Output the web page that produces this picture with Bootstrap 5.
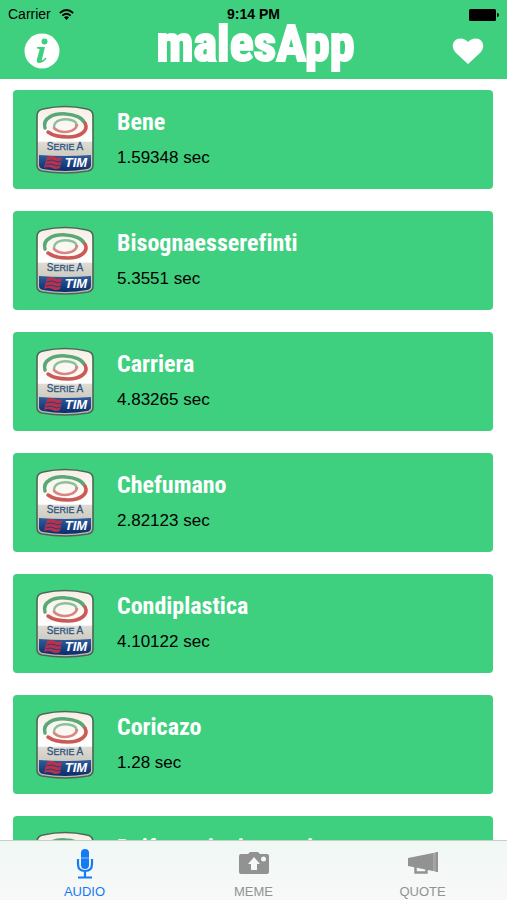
<!DOCTYPE html>
<html lang="it">
<head>
<meta charset="utf-8">
<meta name="viewport" content="width=device-width, initial-scale=1">
<title>malesApp</title>
<link href="https://cdn.jsdelivr.net/npm/bootstrap@5.3.0/dist/css/bootstrap.min.css" rel="stylesheet">
<style>
body { font-family: "Liberation Sans", Arial, sans-serif; color: #000; background: #fff; }
.app-header { background: #3fd07f; }
.status-line { font-size: 14px; line-height: 16px; padding: 6px 8px 0; }
.status-line > * { flex: 1 1 0; }
.title-line { padding: 0 22px 0 24px; height: 57px; }
.app-title, .clip-name { font-family: "Roboto Condensed", Roboto, sans-serif; font-weight: 700; color: #fff; font-variant-ligatures: none; }
.app-title { font-size: 50px; line-height: 44px; padding-bottom: 14px; -webkit-text-stroke: 2px #fff; }
.icon-btn { background: none; border: 0; padding: 0; line-height: 0; }
.clip-list { padding: 11px 14px 0 13px; gap: 22px; min-height: 0; }
.clip { background: #3fd07f; border: 0; border-radius: 4px; height: 99px; padding: 0 22px; gap: 22px; text-align: left; }
.clip-name { font-size: 24px; line-height: 28px; }
.clip-time { font-size: 17px; line-height: 20px; margin: 12px 0 4px; }
.tab-bar { height: 60px; background: linear-gradient(#f0f8f4, #f8f8f8); border-top: 1px solid #c4d0c9; }
.tab-link { color: #929292; font-size: 13px; line-height: 16px; text-decoration: none; padding-top: 7px; }
.tab-link.current { color: #147bf5; }
.tab-link svg { margin-bottom: 4px; }
</style>
<script src="https://cdn.jsdelivr.net/npm/bootstrap@5.3.0/dist/js/bootstrap.bundle.min.js"></script>
</head>
<body class="vh-100 d-flex flex-column overflow-hidden">
<svg width="0" height="0" class="position-absolute" aria-hidden="true">
  <defs>
    <linearGradient id="shade" x1="0" y1="0" x2="0" y2="1"><stop offset="0" stop-color="#f6eee4"/><stop offset=".52" stop-color="#fff"/><stop offset=".54" stop-color="#dedbd3"/><stop offset="1" stop-color="#b9b6ac"/></linearGradient>
    <linearGradient id="blue" x1="0" y1="0" x2="0" y2="1"><stop offset="0" stop-color="#2e5d9c"/><stop offset="1" stop-color="#0b2c6c"/></linearGradient>
    <symbol id="badge-art" viewBox="0 0 60 72">
      <path d="M2 12Q2 6 8 5Q30 0 52 5Q58 6 58 12V61Q58 66 53 67Q30 71 7 67Q2 66 2 61Z" fill="url(#shade)" stroke="#4c6657" stroke-width="1.600"/>
      <g fill="none" stroke-linecap="round">
        <path d="M10 24C7 14 19 9 31 10C40 10.500 47 14 49 18" stroke="#5aa877" stroke-width="3.500"/>
        <path d="M19 23C19 16 29 14 36 16C40 17 42 19 41 21" stroke="#8cc09b" stroke-width="2.500"/>
        <path d="M50 19C54 27 45 33 33 33C24 33 17 31 13 28" stroke="#cb5a57" stroke-width="3.500"/>
        <path d="M42 21C41 26 35 28 30 28C25 28 21 26 19 24" stroke="#d98681" stroke-width="2.500"/>
      </g>
      <path d="M4 51Q30 53 56 51V61Q56 64 52 65Q30 69 8 65Q4 64 4 61Z" fill="url(#blue)"/>
      <path d="M12 53Q17 51 20 53T27 53L25 64Q21 66 17 64T9 64Z" fill="#b8324c"/>
      <path d="M12 57Q17 55 20 57T26 57M11 61Q16 59 19 61T25 61" fill="none" stroke="#243f7a" stroke-width="1"/>
      <text x="30" y="46" text-anchor="middle" font-family="Liberation Sans, sans-serif" font-size="10" fill="#2f5480" stroke="#2f5480" stroke-width=".3">S<tspan font-size="9">ERIE</tspan> A</text>
      <text x="41" y="63" text-anchor="middle" font-family="Liberation Sans, sans-serif" font-size="13" font-weight="700" font-style="italic" fill="#fff">TIM</text>
    </symbol>
  </defs>
</svg>

<header class="app-header flex-shrink-0">
  <div class="status-line d-flex align-items-center">
    <div class="d-flex align-items-center gap-2"><span>Carrier</span>
      <svg width="15" height="11" viewBox="0 0 15 11" aria-hidden="true"><g fill="none" stroke="#000" stroke-width="1.800"><path d="M.8 4Q7.500-2 14.200 4"/><path d="M3.300 6.600Q7.500 2.800 11.700 6.600"/></g><path d="M5 8.300Q7.500 6.200 10 8.300L7.500 11Z"/></svg>
    </div>
    <strong class="text-center">9:14 PM</strong>
    <div class="text-end lh-1"><svg width="30" height="12" viewBox="0 0 30 12" role="img" aria-label="Battery"><rect width="27" height="12" rx="1.500"/><path d="M28 4Q30 4 30 6T28 8Z"/></svg></div>
  </div>
  <div class="title-line d-flex align-items-center justify-content-between">
    <button class="icon-btn" type="button" aria-label="Info"><svg width="36" height="36" viewBox="0 0 36 36"><circle cx="18" cy="18" r="17.500" fill="#fff"/><circle cx="20.500" cy="8.500" r="3" fill="#3fd07f"/><path d="M13 14H21L18 26Q17.500 28 19 27L21.500 24.500L22.500 25.500Q19 30 15 30Q12 30 13 26L15.500 17Q16 15.500 13 15.500Z" fill="#3fd07f"/></svg></button>
    <h1 class="app-title m-0">malesApp</h1>
    <button class="icon-btn" type="button" aria-label="Favourites"><svg width="34" height="28" viewBox="0 0 34 28"><path d="M17 27L5 16C-1 10 2 1.500 9.500 1.500Q14 1.500 17 5Q20 1.500 24.500 1.500C32 1.500 35 10 29 16Z" fill="#fff"/></svg></button>
  </div>
</header>

<main class="clip-list flex-grow-1 d-flex flex-column overflow-hidden">
  <button type="button" class="clip flex-shrink-0 d-flex align-items-center"><svg width="60" height="72" aria-hidden="true"><use href="#badge-art"/></svg><span class="d-flex flex-column"><span class="clip-name">Bene</span><span class="clip-time">1.59348 sec</span></span></button>
  <button type="button" class="clip flex-shrink-0 d-flex align-items-center"><svg width="60" height="72" aria-hidden="true"><use href="#badge-art"/></svg><span class="d-flex flex-column"><span class="clip-name">Bisognaesserefinti</span><span class="clip-time">5.3551 sec</span></span></button>
  <button type="button" class="clip flex-shrink-0 d-flex align-items-center"><svg width="60" height="72" aria-hidden="true"><use href="#badge-art"/></svg><span class="d-flex flex-column"><span class="clip-name">Carriera</span><span class="clip-time">4.83265 sec</span></span></button>
  <button type="button" class="clip flex-shrink-0 d-flex align-items-center"><svg width="60" height="72" aria-hidden="true"><use href="#badge-art"/></svg><span class="d-flex flex-column"><span class="clip-name">Chefumano</span><span class="clip-time">2.82123 sec</span></span></button>
  <button type="button" class="clip flex-shrink-0 d-flex align-items-center"><svg width="60" height="72" aria-hidden="true"><use href="#badge-art"/></svg><span class="d-flex flex-column"><span class="clip-name">Condiplastica</span><span class="clip-time">4.10122 sec</span></span></button>
  <button type="button" class="clip flex-shrink-0 d-flex align-items-center"><svg width="60" height="72" aria-hidden="true"><use href="#badge-art"/></svg><span class="d-flex flex-column"><span class="clip-name">Coricazo</span><span class="clip-time">1.28 sec</span></span></button>
  <button type="button" class="clip flex-shrink-0 d-flex align-items-center"><svg width="60" height="72" aria-hidden="true"><use href="#badge-art"/></svg><span class="d-flex flex-column"><span class="clip-name">Daifomacinoisemani</span><span class="clip-time">2 sec</span></span></button>
</main>

<nav class="tab-bar flex-shrink-0 d-flex" aria-label="Sections">
  <a href="#audio" class="tab-link current col d-flex flex-column align-items-center" aria-current="page"><svg width="18" height="32" viewBox="0 0 18 32" aria-hidden="true"><rect x="5" y="1" width="8" height="20" rx="4" fill="#147bf5"/><path d="M5 10H13" stroke="#8fc0f8"/><path d="M2 11V16Q2 23 9 23T16 16V11M9 23V29M2 29.500H16" fill="none" stroke="#147bf5" stroke-width="2.200"/></svg>AUDIO</a>
  <a href="#meme" class="tab-link col d-flex flex-column align-items-center"><svg width="30" height="32" viewBox="0 0 30 32" aria-hidden="true"><path d="M2 6H9L11 4H19L21 6H28Q30 6 30 8V24Q30 26 28 26H2Q0 26 0 24V8Q0 6 2 6Z" fill="#929292"/><path d="M15 9L21 16H18V22H12V16H9Z" fill="#f4f9f6"/><circle cx="24.500" cy="11" r="2.500" fill="#f4f9f6"/></svg>MEME</a>
  <a href="#quote" class="tab-link col d-flex flex-column align-items-center"><svg width="30" height="32" viewBox="0 0 30 32" aria-hidden="true"><path d="M0 10L25 5V23L0 18Z" fill="#929292"/><path d="M25 5L30 4V24L25 23Z" fill="#a6a6a6"/><path d="M29 4V24M7.500 18V24.500H18.500V20" fill="none" stroke="#929292" stroke-width="2.500"/></svg>QUOTE</a>
</nav>
</body>
</html>
